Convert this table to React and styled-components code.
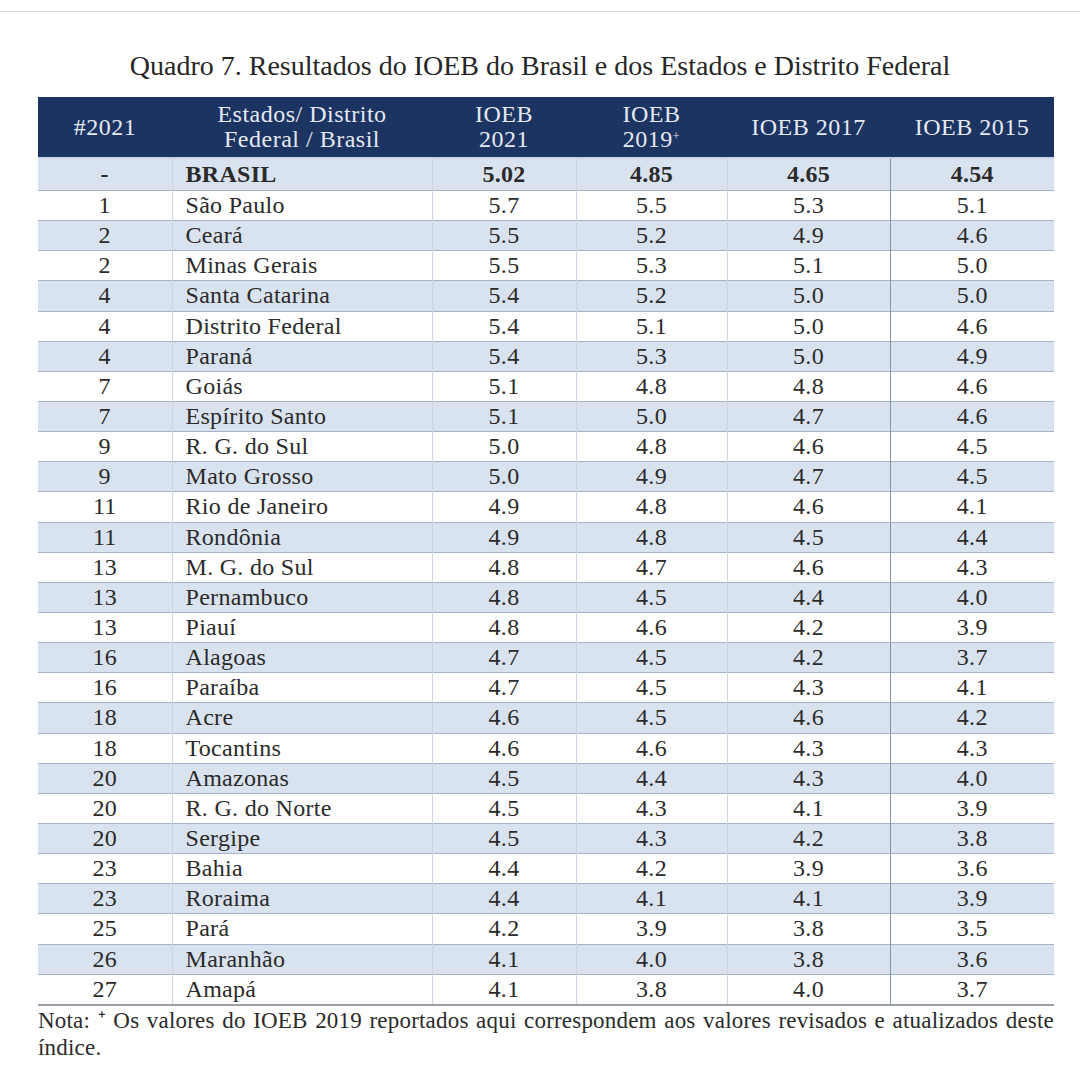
import React from "react";
import styled, { createGlobalStyle } from "styled-components";

const GlobalStyle = createGlobalStyle`
  body {
    margin: 0;
    background: #ffffff;
    font-family: "Liberation Serif", "Times New Roman", serif;
    color: #2b2b2b;
  }
`;

const Page = styled.div`
  width: 1080px;
  height: 1080px;
  box-sizing: border-box;
  padding-top: 11px;
  overflow: hidden;
`;

const TopRule = styled.div`
  height: 1px;
  background: #dcdcdc;
`;

const Title = styled.h1`
  margin: 38px 0 0 0;
  font-size: 28px;
  line-height: 32px;
  font-weight: normal;
  text-align: center;
  color: #262626;
`;

const Table = styled.table`
  margin: 15px 0 0 38px;
  width: 1016px;
  border-collapse: collapse;
  table-layout: fixed;
  border-bottom: 2px solid #9b9fa8;
`;

const Plus = styled.span`
  display: inline-block;
  font-size: 12px;
  line-height: 12px;
  vertical-align: 7px;
`;

const HeadCell = styled.th`
  height: 60px;
  padding: 0;
  background: #1c3461;
  color: #e4e9f2;
  font-weight: normal;
  font-size: 24px;
  line-height: 25px;
  letter-spacing: 0.5px;
  text-align: center;
  border-bottom: 2px solid #c9d4e6;
`;

const Row = styled.tr`
  background: ${(p) => (p.$shaded ? "#d9e2ef" : "#ffffff")};
`;

const Cell = styled.td`
  height: ${(p) => (p.$bold ? "31px" : "29.15px")};
  padding: 0;
  padding-left: ${(p) => (p.$left ? "13px" : "0")};
  font-size: 24px;
  line-height: 25px;
  letter-spacing: 0.3px;
  font-weight: ${(p) => (p.$bold ? "bold" : "normal")};
  text-align: ${(p) => (p.$left ? "left" : "center")};
  color: #2b2b2b;
  border-top: 1px solid #a7b3c8;
  border-left: 1px solid ${(p) => (p.$strong ? "#8592ad" : "#cdd5e2")};
  white-space: nowrap;
  &:first-child {
    border-left: none;
  }
`;

const Note = styled.p`
  margin: 1px 26px 0 38px;
  font-size: 23px;
  line-height: 27px;
  letter-spacing: 0.2px;
  text-align: justify;
  color: #2b2b2b;
`;

const widths = [134, 260, 144, 151, 163, 164];

const rows = [
  ["1", "São Paulo", "5.7", "5.5", "5.3", "5.1"],
  ["2", "Ceará", "5.5", "5.2", "4.9", "4.6"],
  ["2", "Minas Gerais", "5.5", "5.3", "5.1", "5.0"],
  ["4", "Santa Catarina", "5.4", "5.2", "5.0", "5.0"],
  ["4", "Distrito Federal", "5.4", "5.1", "5.0", "4.6"],
  ["4", "Paraná", "5.4", "5.3", "5.0", "4.9"],
  ["7", "Goiás", "5.1", "4.8", "4.8", "4.6"],
  ["7", "Espírito Santo", "5.1", "5.0", "4.7", "4.6"],
  ["9", "R. G. do Sul", "5.0", "4.8", "4.6", "4.5"],
  ["9", "Mato Grosso", "5.0", "4.9", "4.7", "4.5"],
  ["11", "Rio de Janeiro", "4.9", "4.8", "4.6", "4.1"],
  ["11", "Rondônia", "4.9", "4.8", "4.5", "4.4"],
  ["13", "M. G. do Sul", "4.8", "4.7", "4.6", "4.3"],
  ["13", "Pernambuco", "4.8", "4.5", "4.4", "4.0"],
  ["13", "Piauí", "4.8", "4.6", "4.2", "3.9"],
  ["16", "Alagoas", "4.7", "4.5", "4.2", "3.7"],
  ["16", "Paraíba", "4.7", "4.5", "4.3", "4.1"],
  ["18", "Acre", "4.6", "4.5", "4.6", "4.2"],
  ["18", "Tocantins", "4.6", "4.6", "4.3", "4.3"],
  ["20", "Amazonas", "4.5", "4.4", "4.3", "4.0"],
  ["20", "R. G. do Norte", "4.5", "4.3", "4.1", "3.9"],
  ["20", "Sergipe", "4.5", "4.3", "4.2", "3.8"],
  ["23", "Bahia", "4.4", "4.2", "3.9", "3.6"],
  ["23", "Roraima", "4.4", "4.1", "4.1", "3.9"],
  ["25", "Pará", "4.2", "3.9", "3.8", "3.5"],
  ["26", "Maranhão", "4.1", "4.0", "3.8", "3.6"],
  ["27", "Amapá", "4.1", "3.8", "4.0", "3.7"],
];

const App = () => {
  return (
    <Page>
      <GlobalStyle />
      <TopRule />
      <Title>Quadro 7. Resultados do IOEB do Brasil e dos Estados e Distrito Federal</Title>
      <Table>
        <colgroup>
          {widths.map((w, i) => (
            <col key={i} style={{ width: w }} />
          ))}
        </colgroup>
        <thead>
          <tr>
            <HeadCell>#2021</HeadCell>
            <HeadCell>Estados/ Distrito<br />Federal / Brasil</HeadCell>
            <HeadCell>IOEB<br />2021</HeadCell>
            <HeadCell>IOEB<br />2019<Plus>+</Plus></HeadCell>
            <HeadCell>IOEB 2017</HeadCell>
            <HeadCell>IOEB 2015</HeadCell>
          </tr>
        </thead>
        <tbody>
          <Row $shaded>
            <Cell $bold>-</Cell>
            <Cell $bold $left>BRASIL</Cell>
            <Cell $bold>5.02</Cell>
            <Cell $bold>4.85</Cell>
            <Cell $bold>4.65</Cell>
            <Cell $bold $strong>4.54</Cell>
          </Row>
          {rows.map((r, i) => (
            <Row key={`row-${i}`} $shaded={i % 2 === 1}>
              <Cell>{r[0]}</Cell>
              <Cell $left>{r[1]}</Cell>
              <Cell>{r[2]}</Cell>
              <Cell>{r[3]}</Cell>
              <Cell>{r[4]}</Cell>
              <Cell $strong>{r[5]}</Cell>
            </Row>
          ))}
        </tbody>
      </Table>
      <Note>
        {"Nota: ⁺ Os valores do IOEB 2019 reportados aqui correspondem aos valores revisados e atualizados deste índice."}
      </Note>
    </Page>
  );
};

export default App;
